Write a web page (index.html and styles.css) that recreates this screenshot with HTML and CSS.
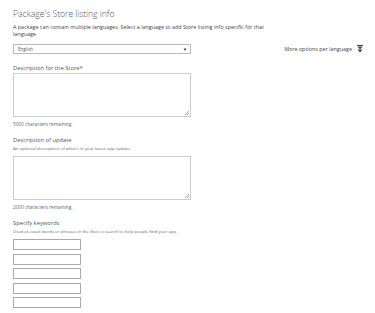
FILE: index.html
```html
<!DOCTYPE html>
<html>
<head>
  <meta charset="utf-8">
  <meta name="viewport" content="width=device-width">
  <title>Store listing</title>
  <link rel="stylesheet" href="styles.css">
</head>
<body>

  <div class="page">
    <h1 class="title">Package's Store listing info</h1>
    <p class="intro">A package can contain multiple languages. Select a language to add Store listing info specific for that language.</p>

    <div class="langrow">
      <div class="langselect">
        <span>English</span>
        <span class="caret">&#9660;</span>
      </div>
      <div class="moreopts">
        <span>More options per language</span>
        <svg width="6" height="8" viewBox="0 0 6 8">
          <path d="M0 0.5 H6" stroke="#444" stroke-width="1"/>
          <path d="M0.5 1.5 H5.5 L3 4.5 Z" fill="#444"/>
          <path d="M0.5 4.5 H5.5 L3 7.5 Z" fill="#444"/>
        </svg>
      </div>
    </div>

    <div class="field first">
      <div class="label">Description for the Store*</div>
      <div class="area"><span class="grip"></span></div>
      <div class="note">5000 characters remaining.</div>
    </div>

    <div class="field">
      <div class="label">Description of update</div>
      <div class="hint">An optional description of what's in your latest app update.</div>
      <div class="area"><span class="grip"></span></div>
      <div class="note">2000 characters remaining.</div>
    </div>

    <div class="field">
      <div class="label">Specify keywords</div>
      <div class="hint">Used as exact words or phrases in the Store's search to help people find your app.</div>
      <div class="keywords">
        <div class="kw"></div>
        <div class="kw"></div>
        <div class="kw"></div>
        <div class="kw"></div>
        <div class="kw"></div>
      </div>
    </div>
  </div>

</body>
</html>
```

FILE: styles.css
```css
html, body {
  margin: 0;
  padding: 0;
  background: #fff;
  font-family: "Open Sans", "Noto Sans", sans-serif;
  color: #444;
}

.page {
  padding: 8px 12px 0 13px;
}

.title {
  margin: 0;
  font-size: 8.6px;
  font-weight: 300;
  line-height: 12px;
  color: #555;
}

.intro {
  margin: 4px 0 0 0;
  width: 275px;
  font-size: 5.4px;
  line-height: 7px;
  color: #444;
}

.langrow {
  display: flex;
  justify-content: space-between;
  align-items: center;
  margin-top: 6px;
}

.langselect {
  box-sizing: border-box;
  width: 178px;
  height: 10px;
  border: 1px solid #bbb;
  display: flex;
  justify-content: space-between;
  align-items: center;
  padding: 0 3px 0 4px;
  font-size: 4.6px;
  color: #555;
}

.langselect .caret {
  font-size: 4.4px;
  color: #333;
}

.moreopts {
  display: flex;
  align-items: center;
  gap: 5px;
  font-size: 5.4px;
  color: #444;
}

.field .label {
  font-size: 5.8px;
  line-height: 8px;
  color: #555;
}

.field {
  margin-top: 9px;
}

.field.first {
  margin-top: 10px;
}

.field .hint {
  margin-top: 1px;
  font-size: 4.3px;
  line-height: 6px;
  color: #666;
}

.area {
  position: relative;
  box-sizing: border-box;
  width: 178px;
  height: 44px;
  margin-top: 1px;
  border: 1px solid #ccc;
}

.field .hint + .area {
  margin-top: 5px;
}

.grip {
  position: absolute;
  right: 1px;
  bottom: 1px;
  width: 4px;
  height: 4px;
  background: linear-gradient(135deg, transparent 45%, #aaa 45%, #aaa 58%, transparent 58%, transparent 72%, #aaa 72%, #aaa 85%, transparent 85%);
}

.note {
  margin-top: 4px;
  font-size: 4.7px;
  line-height: 6px;
  color: #666;
}

.keywords {
  display: flex;
  flex-direction: column;
  gap: 3.5px;
  margin-top: 5px;
}

.kw {
  box-sizing: border-box;
  width: 68px;
  height: 11px;
  border: 1px solid #aaa;
}
```
